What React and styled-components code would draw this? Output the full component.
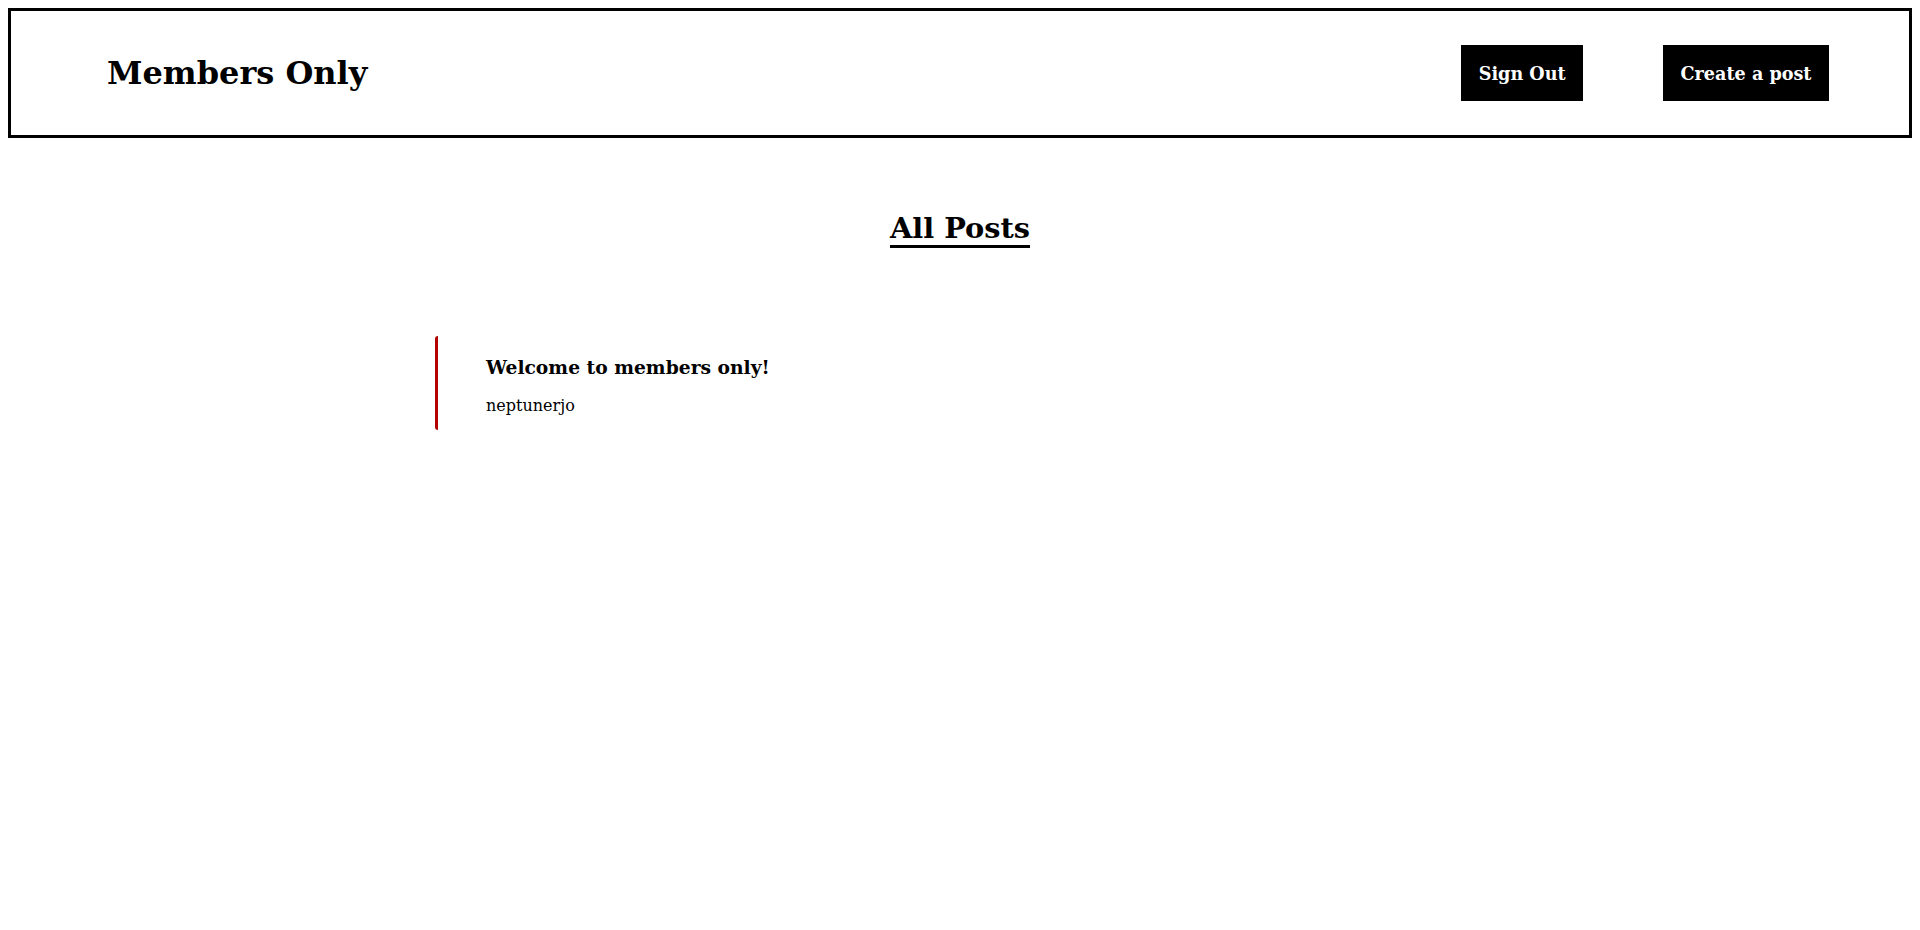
import React from 'react';
import styled, { createGlobalStyle } from 'styled-components';

const GlobalStyle = createGlobalStyle`
  body {
    margin: 8px;
    font-family: "DejaVu Serif", serif;
    color: #000;
    background: #fff;
  }
`;

const Header = styled.header`
  display: flex;
  align-items: center;
  justify-content: space-between;
  height: 124px;
  border: 3px solid #000;
  padding: 0 80px 0 96px;
`;

const Brand = styled.h1`
  margin: 0;
  font-size: 32px;
  font-weight: bold;
`;

const Nav = styled.nav`
  display: flex;
  gap: 80px;
`;

const NavButton = styled.button`
  height: 56px;
  padding: 0 17.5px;
  border: none;
  background: #000;
  color: #fff;
  font-family: "DejaVu Serif", serif;
  font-size: 17.6px;
  font-weight: bold;
  cursor: pointer;
`;

const Main = styled.main`
  display: flex;
  flex-direction: column;
  align-items: center;
  padding-top: 75px;
`;

const PageTitle = styled.h2`
  display: inline-block;
  margin: 0;
  line-height: 1.1;
  font-size: 28.8px;
  font-weight: bold;
  border-bottom: 3px solid #000;
`;

const PostList = styled.section`
  width: 1050px;
  margin-top: 88px;
`;

const Post = styled.article`
  border-left: 3px solid #b30000;
  border-radius: 3px;
  padding: 20px 48px 15px;
`;

const PostTitle = styled.h3`
  margin: 0 0 18px;
  font-size: 18.72px;
  font-weight: bold;
`;

const PostAuthor = styled.p`
  margin: 0;
  font-size: 16px;
`;

const posts = [{ id: 1, title: 'Welcome to members only!', author: 'neptunerjo' }];

export default function App() {
  return (
    <>
      <GlobalStyle />
      <Header>
        <Brand>Members Only</Brand>
        <Nav>
          <NavButton>Sign Out</NavButton>
          <NavButton>Create a post</NavButton>
        </Nav>
      </Header>
      <Main>
        <PageTitle>All Posts</PageTitle>
        <PostList>
          {posts.map((post) => (
            <Post key={post.id}>
              <PostTitle>{post.title}</PostTitle>
              <PostAuthor>{post.author}</PostAuthor>
            </Post>
          ))}
        </PostList>
      </Main>
    </>
  );
}
